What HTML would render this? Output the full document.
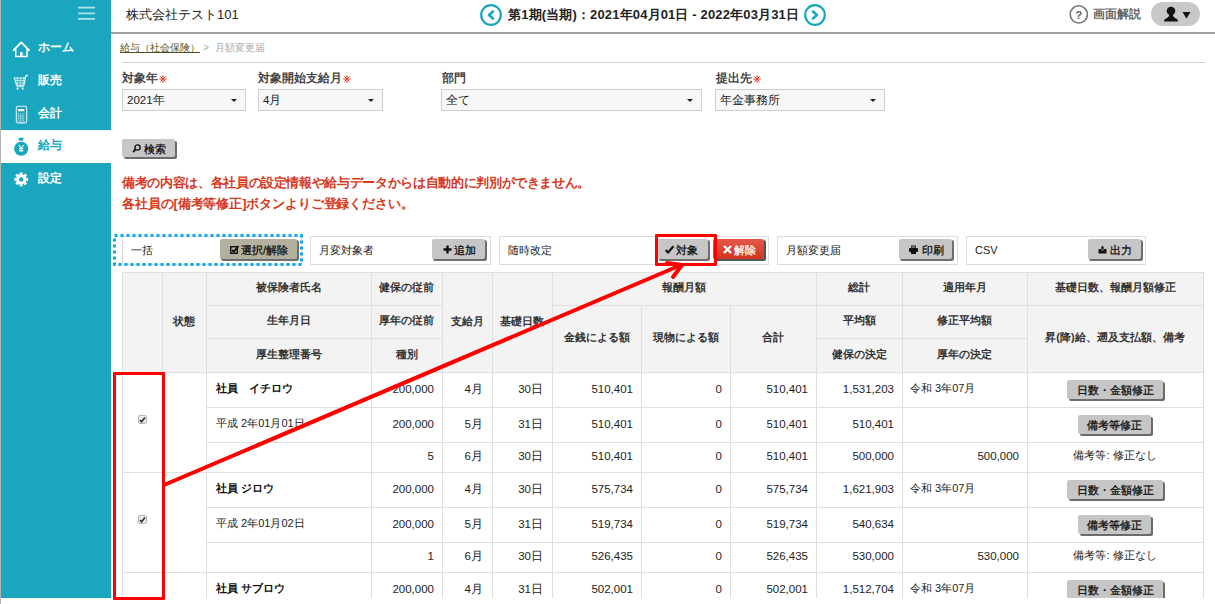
<!DOCTYPE html><html><head><meta charset="utf-8"><style>
*{box-sizing:border-box;margin:0;padding:0}
html,body{width:1215px;height:604px;overflow:hidden;background:#fff}
body{position:relative;font-family:"Liberation Sans",sans-serif;color:#222;font-size:12px}
.ab{position:absolute}
.t{position:absolute;white-space:nowrap;line-height:1}
.btn{position:absolute;background:#c6c6c6;border-radius:2px;box-shadow:2px 2px 0 #6b6b6b;color:#111;white-space:nowrap;text-align:center}
.cell{position:absolute;white-space:nowrap;line-height:1}
</style></head><body>

<div class="ab" style="left:0;top:0;width:1px;height:604px;background:#b4b4b4"></div>
<div class="ab" style="left:1px;top:0;width:110px;height:598px;background:#19a6be"></div>
<svg class="ab" style="left:70px;top:0" width="30" height="26"><g stroke="#b4e2ea" stroke-width="1.8" stroke-linecap="round"><path d="M8.8 7.7 H24.3 M8.8 13.3 H24.3 M8.8 18.8 H24.3"/></g></svg>
<div class="ab" style="left:1px;top:130px;width:110px;height:33px;background:#fff"></div>
<div class="t" style="left:38px;top:41px;font-size:12px;font-weight:bold;color:#fff">ホーム</div>
<div class="t" style="left:38px;top:74px;font-size:12px;font-weight:bold;color:#fff">販売</div>
<div class="t" style="left:38px;top:107px;font-size:12px;font-weight:bold;color:#fff">会計</div>
<div class="t" style="left:38px;top:138.5px;font-size:12px;font-weight:bold;color:#19a6be">給与</div>
<div class="t" style="left:38px;top:171.5px;font-size:12px;font-weight:bold;color:#fff">設定</div>
<svg class="ab" style="left:0;top:0" width="111" height="200" viewBox="0 0 111 200">
<path d="M13.6 50.2 L21.3 42.4 L29 50.2" fill="none" stroke="#fff" stroke-width="1.9" stroke-linecap="round" stroke-linejoin="round"/>
<path d="M15.7 48.5 V56.6 H27 V48.5" fill="none" stroke="#fff" stroke-width="1.5"/>
<rect x="20" y="52.2" width="2.6" height="4.8" fill="#fff"/>
<path d="M14.3 78 H25.2 L24 85.2 H16.6 Z" fill="none" stroke="#fff" stroke-width="1.1" opacity=".9"/>
<path d="M17.3 78 V85 M20.3 78 V85 M23.2 78 V85 M15 80.5 H25 M15.6 83 H24.6" stroke="#fff" stroke-width=".9" opacity=".75"/>
<path d="M25 78.5 L26.2 75.3 H28" fill="none" stroke="#fff" stroke-width="1.2"/>
<path d="M16.5 86.6 H24" stroke="#fff" stroke-width="1" opacity=".8"/>
<circle cx="17.6" cy="88.6" r="1.1" fill="#fff"/><circle cx="22.6" cy="88.6" r="1.1" fill="#fff"/>
<rect x="16.3" y="106.3" width="10.4" height="16.6" rx="1.8" fill="none" stroke="#fff" stroke-width="1.1" opacity=".85"/>
<rect x="18" y="109" width="6.3" height="2.2" fill="#fff"/>
<path d="M18.2 113 V121 M20.6 113 V121 M23 113 V121 M18 116 H24.6 M18 118.3 H24.6 M18 121 H24.6" stroke="#fff" stroke-width=".8" opacity=".55"/>
</svg>
<svg class="ab" style="left:0;top:130" width="111" height="70" viewBox="0 130 111 70">
<path d="M18.2 137.8 H23.8 L22.8 140.8 H19.2 Z" fill="#19a6be"/>
<ellipse cx="21.2" cy="148.8" rx="7.1" ry="7" fill="#19a6be"/>
<path d="M18.8 145 L21.2 148.3 L23.6 145 M21.2 148.3 V152 M19 148.8 H23.4 M19 150.6 H23.4" fill="none" stroke="#fff" stroke-width="1.1"/>
<g fill="#fff" transform="translate(21.2 179.4)"><circle r="5"/><rect x="-1.5" y="-6.9" width="3" height="3.4" transform="rotate(0)"/><rect x="-1.5" y="-6.9" width="3" height="3.4" transform="rotate(45)"/><rect x="-1.5" y="-6.9" width="3" height="3.4" transform="rotate(90)"/><rect x="-1.5" y="-6.9" width="3" height="3.4" transform="rotate(135)"/><rect x="-1.5" y="-6.9" width="3" height="3.4" transform="rotate(180)"/><rect x="-1.5" y="-6.9" width="3" height="3.4" transform="rotate(225)"/><rect x="-1.5" y="-6.9" width="3" height="3.4" transform="rotate(270)"/><rect x="-1.5" y="-6.9" width="3" height="3.4" transform="rotate(315)"/></g>
<circle cx="21.2" cy="179.4" r="2.2" fill="#19a6be"/>
</svg>
<div class="t" style="left:126px;top:8px;font-size:13px;color:#222">株式会社テスト101</div>
<div class="ab" style="left:111px;top:32px;width:1104px;height:2px;background:#a0a0a0"></div>
<svg class="ab" style="left:480px;top:4px" width="22" height="22" viewBox="0 0 22 22"><circle cx="11" cy="11" r="9.8" fill="none" stroke="#19a6be" stroke-width="2.2"/><path d="M13 7.5 L9 11 L13 14.5" fill="none" stroke="#19a6be" stroke-width="2.6" stroke-linecap="round" stroke-linejoin="round"/></svg>
<svg class="ab" style="left:803.5px;top:4px" width="22" height="22" viewBox="0 0 22 22"><circle cx="11" cy="11" r="9.8" fill="none" stroke="#19a6be" stroke-width="2.2"/><path d="M9 7.5 L13 11 L9 14.5" fill="none" stroke="#19a6be" stroke-width="2.6" stroke-linecap="round" stroke-linejoin="round"/></svg>
<div class="t" style="left:508px;top:8px;font-size:13px;letter-spacing:0.15px;font-weight:bold;color:#222">第1期(当期)：2021年04月01日 - 2022年03月31日</div>
<svg class="ab" style="left:1069px;top:5px" width="19" height="19" viewBox="0 0 19 19"><circle cx="9.8" cy="9.4" r="8.6" fill="none" stroke="#777" stroke-width="1.6"/><text x="9.8" y="13.6" font-size="11.5" font-weight="bold" fill="#666" text-anchor="middle" font-family="Liberation Sans">?</text></svg>
<div class="t" style="left:1093px;top:8px;font-size:12px;font-weight:bold;color:#666">画面解説</div>
<div class="ab" style="left:1151px;top:2px;width:49px;height:24px;border-radius:12px;background:#c8c8c8"></div>
<svg class="ab" style="left:1163px;top:6px" width="30" height="17" viewBox="0 0 30 17"><ellipse cx="8" cy="5" rx="4.3" ry="4.2" fill="#111"/><path d="M6.2 8.5 Q6 11.5 2.5 12.8 Q1 13.5 1 15.6 H15 Q15 13.5 13.5 12.8 Q10 11.5 9.8 8.5 Z" fill="#111"/><path d="M19.5 6 H27.5 L23.5 12.5 Z" fill="#111"/></svg>
<div class="t" style="left:120px;top:43px;font-size:10px;color:#50501a;text-decoration:underline">給与（社会保険）</div>
<div class="t" style="left:203px;top:43px;font-size:10px;color:#aaa">&gt;</div>
<div class="t" style="left:215px;top:43px;font-size:10px;color:#aaa">月額変更届</div>
<div class="ab" style="left:122px;top:62px;width:1083px;height:1px;background:#d0d0d0"></div>
<div class="t" style="left:122px;top:73px;font-size:11.5px;font-weight:bold;color:#444">対象年</div>
<svg class="ab" style="left:159.0px;top:75px" width="8" height="8" viewBox="0 0 8 8"><g stroke="#e3402a" stroke-width="1"><path d="M4 0.2 V7.8 M0.2 4 H7.8 M1.3 1.3 L6.7 6.7 M6.7 1.3 L1.3 6.7"/></g><circle cx="4" cy="4" r="1.3" fill="#e3402a"/></svg>
<div class="t" style="left:258px;top:73px;font-size:11.5px;font-weight:bold;color:#444">対象開始支給月</div>
<svg class="ab" style="left:343.0px;top:75px" width="8" height="8" viewBox="0 0 8 8"><g stroke="#e3402a" stroke-width="1"><path d="M4 0.2 V7.8 M0.2 4 H7.8 M1.3 1.3 L6.7 6.7 M6.7 1.3 L1.3 6.7"/></g><circle cx="4" cy="4" r="1.3" fill="#e3402a"/></svg>
<div class="t" style="left:442px;top:73px;font-size:11.5px;font-weight:bold;color:#444">部門</div>
<div class="t" style="left:716px;top:73px;font-size:11.5px;font-weight:bold;color:#444">提出先</div>
<svg class="ab" style="left:752.5px;top:75px" width="8" height="8" viewBox="0 0 8 8"><g stroke="#e3402a" stroke-width="1"><path d="M4 0.2 V7.8 M0.2 4 H7.8 M1.3 1.3 L6.7 6.7 M6.7 1.3 L1.3 6.7"/></g><circle cx="4" cy="4" r="1.3" fill="#e3402a"/></svg>
<div class="ab" style="left:122px;top:89px;width:124px;height:22px;border:1px solid #cfcfcf;background:#f7f7f7"></div>
<div class="t" style="left:127px;top:95px;font-size:11.5px;color:#222">2021年</div>
<div class="ab" style="left:231px;top:99px;width:0;height:0;border-left:3px solid transparent;border-right:3px solid transparent;border-top:3px solid #222"></div>
<div class="ab" style="left:258px;top:89px;width:125px;height:22px;border:1px solid #cfcfcf;background:#f7f7f7"></div>
<div class="t" style="left:263px;top:95px;font-size:11.5px;color:#222">4月</div>
<div class="ab" style="left:368px;top:99px;width:0;height:0;border-left:3px solid transparent;border-right:3px solid transparent;border-top:3px solid #222"></div>
<div class="ab" style="left:441px;top:89px;width:261px;height:22px;border:1px solid #cfcfcf;background:#f7f7f7"></div>
<div class="t" style="left:446px;top:95px;font-size:11.5px;color:#222">全て</div>
<div class="ab" style="left:687px;top:99px;width:0;height:0;border-left:3px solid transparent;border-right:3px solid transparent;border-top:3px solid #222"></div>
<div class="ab" style="left:715px;top:89px;width:170px;height:22px;border:1px solid #cfcfcf;background:#f7f7f7"></div>
<div class="t" style="left:720px;top:95px;font-size:11.5px;color:#222">年金事務所</div>
<div class="ab" style="left:870px;top:99px;width:0;height:0;border-left:3px solid transparent;border-right:3px solid transparent;border-top:3px solid #222"></div>
<div class="btn" style="left:122px;top:139px;width:53px;height:18px"></div>
<svg class="ab" style="left:132px;top:144px" width="9" height="9" viewBox="0 0 9 9"><circle cx="5.5" cy="3.5" r="2.6" fill="none" stroke="#111" stroke-width="1.4"/><path d="M3.6 5.4 L1 8" stroke="#111" stroke-width="1.8"/></svg>
<div class="t" style="left:144px;top:144px;font-size:11px;-webkit-text-stroke:0.3px #111;color:#111">検索</div>
<div class="t" style="left:122px;top:176px;font-size:13px;letter-spacing:-0.35px;font-weight:bold;color:#d8391d">備考の内容は、各社員の設定情報や給与データからは自動的に判別ができません。</div>
<div class="t" style="left:122px;top:197px;font-size:13px;letter-spacing:-0.12px;font-weight:bold;color:#d8391d">各社員の[備考等修正]ボタンよりご登録ください。</div>
<div class="ab" style="left:122px;top:236px;width:180px;height:29px;border:1px solid #dcdcdc;background:#fff"></div>
<div class="t" style="left:131px;top:245px;font-size:11px;color:#222">一括</div>
<div class="ab" style="left:310px;top:236px;width:181px;height:29px;border:1px solid #dcdcdc;background:#fff"></div>
<div class="t" style="left:319px;top:245px;font-size:11px;color:#222">月変対象者</div>
<div class="ab" style="left:499px;top:236px;width:270px;height:29px;border:1px solid #dcdcdc;background:#fff"></div>
<div class="t" style="left:508px;top:245px;font-size:11px;color:#222">随時改定</div>
<div class="ab" style="left:777px;top:236px;width:181px;height:29px;border:1px solid #dcdcdc;background:#fff"></div>
<div class="t" style="left:786px;top:245px;font-size:11px;color:#222">月額変更届</div>
<div class="ab" style="left:966px;top:236px;width:180px;height:29px;border:1px solid #dcdcdc;background:#fff"></div>
<div class="t" style="left:975px;top:245px;font-size:11px;color:#222">CSV</div>
<svg class="ab" style="left:0;top:0" width="320" height="280"><rect x="114.5" y="235.5" width="187" height="29" fill="none" stroke="#0ea8ec" stroke-width="3" stroke-dasharray="3 3"/></svg>
<div class="ab" style="left:220px;top:239px;width:77px;height:20px;background:#b3b09f;border-radius:2px;box-shadow:1.5px 1.5px 0 0.5px #6e6e6e"></div>
<svg class="ab" style="left:230px;top:245px" width="10" height="9" viewBox="0 0 10 9"><rect x="0.7" y="1.7" width="6.6" height="6.6" fill="none" stroke="#111" stroke-width="1.4"/><path d="M2 5 L3.8 6.6 L8.5 1.2" fill="none" stroke="#111" stroke-width="1.8"/></svg>
<div class="t" style="left:241px;top:245px;font-size:11px;-webkit-text-stroke:0.3px #111;color:#111">選択/解除</div>
<div class="ab" style="left:432px;top:239px;width:53px;height:20px;background:#c6c6c6;border-radius:2px;box-shadow:1.5px 1.5px 0 0.5px #6e6e6e"></div>
<svg class="ab" style="left:443px;top:245px" width="10" height="9" viewBox="0 0 10 9"><path d="M4.5 0.5 V8.5 M0.5 4.5 H8.5" stroke="#111" stroke-width="2.4"/></svg>
<div class="t" style="left:454px;top:245px;font-size:11px;-webkit-text-stroke:0.3px #111;color:#111">追加</div>
<div class="ab" style="left:658px;top:239px;width:50px;height:20px;background:#c6c6c6;border-radius:2px;box-shadow:1.5px 1.5px 0 0.5px #6e6e6e"></div>
<svg class="ab" style="left:665px;top:245px" width="10" height="9" viewBox="0 0 10 9"><path d="M0.8 5 L3 7.6 L8.4 1.2" fill="none" stroke="#111" stroke-width="2.2" stroke-linejoin="round"/></svg>
<div class="t" style="left:676px;top:245px;font-size:11px;-webkit-text-stroke:0.3px #111;color:#111">対象</div>
<div class="ab" style="left:713px;top:239px;width:51px;height:20px;background:linear-gradient(#e5574a,#d5331f);border-radius:2px;box-shadow:1.5px 1.5px 0 0.5px #4d5757"></div>
<svg class="ab" style="left:723px;top:245px" width="10" height="9" viewBox="0 0 10 9"><path d="M1 1 L8 8 M8 1 L1 8" stroke="#fff" stroke-width="2.4"/></svg>
<div class="t" style="left:734px;top:245px;font-size:11px;-webkit-text-stroke:0.3px #fff;color:#fff">解除</div>
<div class="ab" style="left:899px;top:239px;width:53px;height:20px;background:#c6c6c6;border-radius:2px;box-shadow:1.5px 1.5px 0 0.5px #6e6e6e"></div>
<svg class="ab" style="left:909px;top:245px" width="10" height="9" viewBox="0 0 10 9"><rect x="2" y="0.5" width="5" height="3" fill="#111"/><rect x="0" y="3" width="9" height="4" rx="1" fill="#111"/><rect x="2" y="6" width="5" height="3" fill="#111"/><rect x="2.5" y="1.5" width="4" height="1" fill="#ccc"/></svg>
<div class="t" style="left:922px;top:245px;font-size:11px;-webkit-text-stroke:0.3px #111;color:#111">印刷</div>
<div class="ab" style="left:1088px;top:239px;width:53px;height:20px;background:#c6c6c6;border-radius:2px;box-shadow:1.5px 1.5px 0 0.5px #6e6e6e"></div>
<svg class="ab" style="left:1098px;top:245px" width="10" height="9" viewBox="0 0 10 9"><path d="M0.5 4 H3 L4.5 6 L6 4 H8.5 V8.5 H0.5 Z" fill="#111"/><path d="M4.5 0.5 L6 3 L4.5 5 L3 3 Z" fill="#111"/></svg>
<div class="t" style="left:1110px;top:245px;font-size:11px;-webkit-text-stroke:0.3px #111;color:#111">出力</div>
<div class="ab" style="left:122px;top:272px;width:41px;height:101px;border:1px solid #dfdfdf;background:#f3f3f3;"></div>
<div class="ab" style="left:162px;top:272px;width:45px;height:101px;border:1px solid #dfdfdf;background:#f3f3f3;"></div>
<div class="cell" style="left:162px;width:44px;top:316px;text-align:center;font-size:11px;font-weight:bold;color:#333">状態</div>
<div class="ab" style="left:206px;top:272px;width:166px;height:34px;border:1px solid #dfdfdf;background:#f3f3f3;"></div>
<div class="cell" style="left:206px;width:165px;top:282px;text-align:center;font-size:11px;font-weight:bold;color:#333">被保険者氏名</div>
<div class="ab" style="left:206px;top:305px;width:166px;height:34px;border:1px solid #dfdfdf;background:#f3f3f3;"></div>
<div class="cell" style="left:206px;width:165px;top:315px;text-align:center;font-size:11px;font-weight:bold;color:#333">生年月日</div>
<div class="ab" style="left:206px;top:338px;width:166px;height:35px;border:1px solid #dfdfdf;background:#f3f3f3;"></div>
<div class="cell" style="left:206px;width:165px;top:349px;text-align:center;font-size:11px;font-weight:bold;color:#333">厚生整理番号</div>
<div class="ab" style="left:371px;top:272px;width:72px;height:34px;border:1px solid #dfdfdf;background:#f3f3f3;"></div>
<div class="cell" style="left:371px;width:71px;top:282px;text-align:center;font-size:11px;font-weight:bold;color:#333">健保の従前</div>
<div class="ab" style="left:371px;top:305px;width:72px;height:34px;border:1px solid #dfdfdf;background:#f3f3f3;"></div>
<div class="cell" style="left:371px;width:71px;top:315px;text-align:center;font-size:11px;font-weight:bold;color:#333">厚年の従前</div>
<div class="ab" style="left:371px;top:338px;width:72px;height:35px;border:1px solid #dfdfdf;background:#f3f3f3;"></div>
<div class="cell" style="left:371px;width:71px;top:349px;text-align:center;font-size:11px;font-weight:bold;color:#333">種別</div>
<div class="ab" style="left:442px;top:272px;width:51px;height:101px;border:1px solid #dfdfdf;background:#f3f3f3;"></div>
<div class="cell" style="left:442px;width:50px;top:316px;text-align:center;font-size:11px;font-weight:bold;color:#333">支給月</div>
<div class="ab" style="left:492px;top:272px;width:61px;height:101px;border:1px solid #dfdfdf;background:#f3f3f3;"></div>
<div class="cell" style="left:492px;width:60px;top:316px;text-align:center;font-size:11px;font-weight:bold;color:#333">基礎日数</div>
<div class="ab" style="left:552px;top:272px;width:265px;height:34px;border:1px solid #dfdfdf;background:#f3f3f3;"></div>
<div class="cell" style="left:552px;width:264px;top:282px;text-align:center;font-size:11px;font-weight:bold;color:#333">報酬月額</div>
<div class="ab" style="left:552px;top:305px;width:90px;height:68px;border:1px solid #dfdfdf;background:#f3f3f3;"></div>
<div class="cell" style="left:552px;width:89px;top:332px;text-align:center;font-size:11px;font-weight:bold;color:#333">金銭による額</div>
<div class="ab" style="left:641px;top:305px;width:90px;height:68px;border:1px solid #dfdfdf;background:#f3f3f3;"></div>
<div class="cell" style="left:641px;width:89px;top:332px;text-align:center;font-size:11px;font-weight:bold;color:#333">現物による額</div>
<div class="ab" style="left:730px;top:305px;width:87px;height:68px;border:1px solid #dfdfdf;background:#f3f3f3;"></div>
<div class="cell" style="left:730px;width:86px;top:332px;text-align:center;font-size:11px;font-weight:bold;color:#333">合計</div>
<div class="ab" style="left:816px;top:272px;width:87px;height:34px;border:1px solid #dfdfdf;background:#f3f3f3;"></div>
<div class="cell" style="left:816px;width:86px;top:282px;text-align:center;font-size:11px;font-weight:bold;color:#333">総計</div>
<div class="ab" style="left:816px;top:305px;width:87px;height:34px;border:1px solid #dfdfdf;background:#f3f3f3;"></div>
<div class="cell" style="left:816px;width:86px;top:315px;text-align:center;font-size:11px;font-weight:bold;color:#333">平均額</div>
<div class="ab" style="left:816px;top:338px;width:87px;height:35px;border:1px solid #dfdfdf;background:#f3f3f3;"></div>
<div class="cell" style="left:816px;width:86px;top:349px;text-align:center;font-size:11px;font-weight:bold;color:#333">健保の決定</div>
<div class="ab" style="left:902px;top:272px;width:126px;height:34px;border:1px solid #dfdfdf;background:#f3f3f3;"></div>
<div class="cell" style="left:902px;width:125px;top:282px;text-align:center;font-size:11px;font-weight:bold;color:#333">適用年月</div>
<div class="ab" style="left:902px;top:305px;width:126px;height:34px;border:1px solid #dfdfdf;background:#f3f3f3;"></div>
<div class="cell" style="left:902px;width:125px;top:315px;text-align:center;font-size:11px;font-weight:bold;color:#333">修正平均額</div>
<div class="ab" style="left:902px;top:338px;width:126px;height:35px;border:1px solid #dfdfdf;background:#f3f3f3;"></div>
<div class="cell" style="left:902px;width:125px;top:349px;text-align:center;font-size:11px;font-weight:bold;color:#333">厚年の決定</div>
<div class="ab" style="left:1027px;top:272px;width:177px;height:34px;border:1px solid #dfdfdf;background:#f3f3f3;"></div>
<div class="cell" style="left:1027px;width:176px;top:282px;text-align:center;font-size:11px;font-weight:bold;color:#333">基礎日数、報酬月額修正</div>
<div class="ab" style="left:1027px;top:305px;width:177px;height:68px;border:1px solid #dfdfdf;background:#f3f3f3;"></div>
<div class="cell" style="left:1027px;width:176px;top:332px;text-align:center;font-size:11px;font-weight:bold;color:#333">昇(降)給、遡及支払額、備考</div>
<div class="ab" style="left:122px;top:372px;width:41px;height:101px;border:1px solid #dfdfdf;"></div>
<div class="ab" style="left:162px;top:372px;width:45px;height:101px;border:1px solid #dfdfdf;"></div>
<div class="ab" style="left:206px;top:372px;width:166px;height:36px;border:1px solid #dfdfdf;"></div>
<div class="ab" style="left:371px;top:372px;width:72px;height:36px;border:1px solid #dfdfdf;"></div>
<div class="ab" style="left:442px;top:372px;width:51px;height:36px;border:1px solid #dfdfdf;"></div>
<div class="ab" style="left:492px;top:372px;width:61px;height:36px;border:1px solid #dfdfdf;"></div>
<div class="ab" style="left:552px;top:372px;width:90px;height:36px;border:1px solid #dfdfdf;"></div>
<div class="ab" style="left:641px;top:372px;width:90px;height:36px;border:1px solid #dfdfdf;"></div>
<div class="ab" style="left:730px;top:372px;width:87px;height:36px;border:1px solid #dfdfdf;"></div>
<div class="ab" style="left:816px;top:372px;width:87px;height:36px;border:1px solid #dfdfdf;"></div>
<div class="ab" style="left:902px;top:372px;width:126px;height:36px;border:1px solid #dfdfdf;"></div>
<div class="ab" style="left:1027px;top:372px;width:177px;height:36px;border:1px solid #dfdfdf;"></div>
<div class="ab" style="left:206px;top:407px;width:166px;height:36px;border:1px solid #dfdfdf;"></div>
<div class="ab" style="left:371px;top:407px;width:72px;height:36px;border:1px solid #dfdfdf;"></div>
<div class="ab" style="left:442px;top:407px;width:51px;height:36px;border:1px solid #dfdfdf;"></div>
<div class="ab" style="left:492px;top:407px;width:61px;height:36px;border:1px solid #dfdfdf;"></div>
<div class="ab" style="left:552px;top:407px;width:90px;height:36px;border:1px solid #dfdfdf;"></div>
<div class="ab" style="left:641px;top:407px;width:90px;height:36px;border:1px solid #dfdfdf;"></div>
<div class="ab" style="left:730px;top:407px;width:87px;height:36px;border:1px solid #dfdfdf;"></div>
<div class="ab" style="left:816px;top:407px;width:87px;height:36px;border:1px solid #dfdfdf;"></div>
<div class="ab" style="left:902px;top:407px;width:126px;height:36px;border:1px solid #dfdfdf;"></div>
<div class="ab" style="left:1027px;top:407px;width:177px;height:36px;border:1px solid #dfdfdf;"></div>
<div class="ab" style="left:206px;top:442px;width:166px;height:31px;border:1px solid #dfdfdf;"></div>
<div class="ab" style="left:371px;top:442px;width:72px;height:31px;border:1px solid #dfdfdf;"></div>
<div class="ab" style="left:442px;top:442px;width:51px;height:31px;border:1px solid #dfdfdf;"></div>
<div class="ab" style="left:492px;top:442px;width:61px;height:31px;border:1px solid #dfdfdf;"></div>
<div class="ab" style="left:552px;top:442px;width:90px;height:31px;border:1px solid #dfdfdf;"></div>
<div class="ab" style="left:641px;top:442px;width:90px;height:31px;border:1px solid #dfdfdf;"></div>
<div class="ab" style="left:730px;top:442px;width:87px;height:31px;border:1px solid #dfdfdf;"></div>
<div class="ab" style="left:816px;top:442px;width:87px;height:31px;border:1px solid #dfdfdf;"></div>
<div class="ab" style="left:902px;top:442px;width:126px;height:31px;border:1px solid #dfdfdf;"></div>
<div class="ab" style="left:1027px;top:442px;width:177px;height:31px;border:1px solid #dfdfdf;"></div>
<div class="ab" style="left:138px;top:415px;width:9px;height:9px;border:1px solid #b5b5b5;border-radius:2px;background:#ececec"></div>
<svg class="ab" style="left:138px;top:415px" width="9" height="9" viewBox="0 0 9 9"><path d="M2 5.2 L3.6 6.8 L7 2.5" fill="none" stroke="#333" stroke-width="1.7"/></svg>
<div class="cell" style="left:216px;top:383px;font-size:11px;font-weight:bold;color:#111">社員　イチロウ</div>
<div class="cell" style="left:371px;width:63px;top:384px;text-align:right;font-size:11.5px;color:#222">200,000</div>
<div class="cell" style="left:442px;width:41px;top:384px;text-align:right;font-size:11.5px;color:#222">4月</div>
<div class="cell" style="left:492px;width:51px;top:384px;text-align:right;font-size:11.5px;color:#222">30日</div>
<div class="cell" style="left:552px;width:81px;top:384px;text-align:right;font-size:11.5px;color:#222">510,401</div>
<div class="cell" style="left:641px;width:81px;top:384px;text-align:right;font-size:11.5px;color:#222">0</div>
<div class="cell" style="left:730px;width:78px;top:384px;text-align:right;font-size:11.5px;color:#222">510,401</div>
<div class="cell" style="left:816px;width:78px;top:384px;text-align:right;font-size:11.5px;color:#222">1,531,203</div>
<div class="cell" style="left:910px;top:383px;font-size:11px;color:#222">令和 3年07月</div>
<div class="btn" style="left:1067px;top:380px;width:96px;height:19px;background:#c6c6c6;color:#111;font-size:11px;font-weight:bold;line-height:19px"><span style="position:relative;top:1px;font-weight:normal;-webkit-text-stroke:0.3px #111">日数・金額修正</span></div>
<div class="cell" style="left:216px;top:418px;font-size:11px;color:#222">平成 2年01月01日</div>
<div class="cell" style="left:371px;width:63px;top:419px;text-align:right;font-size:11.5px;color:#222">200,000</div>
<div class="cell" style="left:442px;width:41px;top:419px;text-align:right;font-size:11.5px;color:#222">5月</div>
<div class="cell" style="left:492px;width:51px;top:419px;text-align:right;font-size:11.5px;color:#222">31日</div>
<div class="cell" style="left:552px;width:81px;top:419px;text-align:right;font-size:11.5px;color:#222">510,401</div>
<div class="cell" style="left:641px;width:81px;top:419px;text-align:right;font-size:11.5px;color:#222">0</div>
<div class="cell" style="left:730px;width:78px;top:419px;text-align:right;font-size:11.5px;color:#222">510,401</div>
<div class="cell" style="left:816px;width:78px;top:419px;text-align:right;font-size:11.5px;color:#222">510,401</div>
<div class="btn" style="left:1078px;top:415px;width:73px;height:19px;background:#c6c6c6;color:#111;font-size:11px;font-weight:bold;line-height:19px"><span style="position:relative;top:1px;font-weight:normal;-webkit-text-stroke:0.3px #111">備考等修正</span></div>
<div class="cell" style="left:371px;width:63px;top:451px;text-align:right;font-size:11.5px;color:#222">5</div>
<div class="cell" style="left:442px;width:41px;top:451px;text-align:right;font-size:11.5px;color:#222">6月</div>
<div class="cell" style="left:492px;width:51px;top:451px;text-align:right;font-size:11.5px;color:#222">30日</div>
<div class="cell" style="left:552px;width:81px;top:451px;text-align:right;font-size:11.5px;color:#222">510,401</div>
<div class="cell" style="left:641px;width:81px;top:451px;text-align:right;font-size:11.5px;color:#222">0</div>
<div class="cell" style="left:730px;width:78px;top:451px;text-align:right;font-size:11.5px;color:#222">510,401</div>
<div class="cell" style="left:816px;width:78px;top:451px;text-align:right;font-size:11.5px;color:#222">500,000</div>
<div class="cell" style="left:902px;width:117px;top:451px;text-align:right;font-size:11.5px;color:#222">500,000</div>
<div class="cell" style="left:1027px;width:176px;top:450px;text-align:center;font-size:11px;color:#222">備考等: 修正なし</div>
<div class="ab" style="left:122px;top:472px;width:41px;height:101px;border:1px solid #dfdfdf;"></div>
<div class="ab" style="left:162px;top:472px;width:45px;height:101px;border:1px solid #dfdfdf;"></div>
<div class="ab" style="left:206px;top:472px;width:166px;height:36px;border:1px solid #dfdfdf;"></div>
<div class="ab" style="left:371px;top:472px;width:72px;height:36px;border:1px solid #dfdfdf;"></div>
<div class="ab" style="left:442px;top:472px;width:51px;height:36px;border:1px solid #dfdfdf;"></div>
<div class="ab" style="left:492px;top:472px;width:61px;height:36px;border:1px solid #dfdfdf;"></div>
<div class="ab" style="left:552px;top:472px;width:90px;height:36px;border:1px solid #dfdfdf;"></div>
<div class="ab" style="left:641px;top:472px;width:90px;height:36px;border:1px solid #dfdfdf;"></div>
<div class="ab" style="left:730px;top:472px;width:87px;height:36px;border:1px solid #dfdfdf;"></div>
<div class="ab" style="left:816px;top:472px;width:87px;height:36px;border:1px solid #dfdfdf;"></div>
<div class="ab" style="left:902px;top:472px;width:126px;height:36px;border:1px solid #dfdfdf;"></div>
<div class="ab" style="left:1027px;top:472px;width:177px;height:36px;border:1px solid #dfdfdf;"></div>
<div class="ab" style="left:206px;top:507px;width:166px;height:36px;border:1px solid #dfdfdf;"></div>
<div class="ab" style="left:371px;top:507px;width:72px;height:36px;border:1px solid #dfdfdf;"></div>
<div class="ab" style="left:442px;top:507px;width:51px;height:36px;border:1px solid #dfdfdf;"></div>
<div class="ab" style="left:492px;top:507px;width:61px;height:36px;border:1px solid #dfdfdf;"></div>
<div class="ab" style="left:552px;top:507px;width:90px;height:36px;border:1px solid #dfdfdf;"></div>
<div class="ab" style="left:641px;top:507px;width:90px;height:36px;border:1px solid #dfdfdf;"></div>
<div class="ab" style="left:730px;top:507px;width:87px;height:36px;border:1px solid #dfdfdf;"></div>
<div class="ab" style="left:816px;top:507px;width:87px;height:36px;border:1px solid #dfdfdf;"></div>
<div class="ab" style="left:902px;top:507px;width:126px;height:36px;border:1px solid #dfdfdf;"></div>
<div class="ab" style="left:1027px;top:507px;width:177px;height:36px;border:1px solid #dfdfdf;"></div>
<div class="ab" style="left:206px;top:542px;width:166px;height:31px;border:1px solid #dfdfdf;"></div>
<div class="ab" style="left:371px;top:542px;width:72px;height:31px;border:1px solid #dfdfdf;"></div>
<div class="ab" style="left:442px;top:542px;width:51px;height:31px;border:1px solid #dfdfdf;"></div>
<div class="ab" style="left:492px;top:542px;width:61px;height:31px;border:1px solid #dfdfdf;"></div>
<div class="ab" style="left:552px;top:542px;width:90px;height:31px;border:1px solid #dfdfdf;"></div>
<div class="ab" style="left:641px;top:542px;width:90px;height:31px;border:1px solid #dfdfdf;"></div>
<div class="ab" style="left:730px;top:542px;width:87px;height:31px;border:1px solid #dfdfdf;"></div>
<div class="ab" style="left:816px;top:542px;width:87px;height:31px;border:1px solid #dfdfdf;"></div>
<div class="ab" style="left:902px;top:542px;width:126px;height:31px;border:1px solid #dfdfdf;"></div>
<div class="ab" style="left:1027px;top:542px;width:177px;height:31px;border:1px solid #dfdfdf;"></div>
<div class="ab" style="left:138px;top:515px;width:9px;height:9px;border:1px solid #b5b5b5;border-radius:2px;background:#ececec"></div>
<svg class="ab" style="left:138px;top:515px" width="9" height="9" viewBox="0 0 9 9"><path d="M2 5.2 L3.6 6.8 L7 2.5" fill="none" stroke="#333" stroke-width="1.7"/></svg>
<div class="cell" style="left:216px;top:483px;font-size:11px;font-weight:bold;color:#111">社員 ジロウ</div>
<div class="cell" style="left:371px;width:63px;top:484px;text-align:right;font-size:11.5px;color:#222">200,000</div>
<div class="cell" style="left:442px;width:41px;top:484px;text-align:right;font-size:11.5px;color:#222">4月</div>
<div class="cell" style="left:492px;width:51px;top:484px;text-align:right;font-size:11.5px;color:#222">30日</div>
<div class="cell" style="left:552px;width:81px;top:484px;text-align:right;font-size:11.5px;color:#222">575,734</div>
<div class="cell" style="left:641px;width:81px;top:484px;text-align:right;font-size:11.5px;color:#222">0</div>
<div class="cell" style="left:730px;width:78px;top:484px;text-align:right;font-size:11.5px;color:#222">575,734</div>
<div class="cell" style="left:816px;width:78px;top:484px;text-align:right;font-size:11.5px;color:#222">1,621,903</div>
<div class="cell" style="left:910px;top:483px;font-size:11px;color:#222">令和 3年07月</div>
<div class="btn" style="left:1067px;top:480px;width:96px;height:19px;background:#c6c6c6;color:#111;font-size:11px;font-weight:bold;line-height:19px"><span style="position:relative;top:1px;font-weight:normal;-webkit-text-stroke:0.3px #111">日数・金額修正</span></div>
<div class="cell" style="left:216px;top:518px;font-size:11px;color:#222">平成 2年01月02日</div>
<div class="cell" style="left:371px;width:63px;top:519px;text-align:right;font-size:11.5px;color:#222">200,000</div>
<div class="cell" style="left:442px;width:41px;top:519px;text-align:right;font-size:11.5px;color:#222">5月</div>
<div class="cell" style="left:492px;width:51px;top:519px;text-align:right;font-size:11.5px;color:#222">31日</div>
<div class="cell" style="left:552px;width:81px;top:519px;text-align:right;font-size:11.5px;color:#222">519,734</div>
<div class="cell" style="left:641px;width:81px;top:519px;text-align:right;font-size:11.5px;color:#222">0</div>
<div class="cell" style="left:730px;width:78px;top:519px;text-align:right;font-size:11.5px;color:#222">519,734</div>
<div class="cell" style="left:816px;width:78px;top:519px;text-align:right;font-size:11.5px;color:#222">540,634</div>
<div class="btn" style="left:1078px;top:515px;width:73px;height:19px;background:#c6c6c6;color:#111;font-size:11px;font-weight:bold;line-height:19px"><span style="position:relative;top:1px;font-weight:normal;-webkit-text-stroke:0.3px #111">備考等修正</span></div>
<div class="cell" style="left:371px;width:63px;top:551px;text-align:right;font-size:11.5px;color:#222">1</div>
<div class="cell" style="left:442px;width:41px;top:551px;text-align:right;font-size:11.5px;color:#222">6月</div>
<div class="cell" style="left:492px;width:51px;top:551px;text-align:right;font-size:11.5px;color:#222">30日</div>
<div class="cell" style="left:552px;width:81px;top:551px;text-align:right;font-size:11.5px;color:#222">526,435</div>
<div class="cell" style="left:641px;width:81px;top:551px;text-align:right;font-size:11.5px;color:#222">0</div>
<div class="cell" style="left:730px;width:78px;top:551px;text-align:right;font-size:11.5px;color:#222">526,435</div>
<div class="cell" style="left:816px;width:78px;top:551px;text-align:right;font-size:11.5px;color:#222">530,000</div>
<div class="cell" style="left:902px;width:117px;top:551px;text-align:right;font-size:11.5px;color:#222">530,000</div>
<div class="cell" style="left:1027px;width:176px;top:550px;text-align:center;font-size:11px;color:#222">備考等: 修正なし</div>
<div class="ab" style="left:122px;top:572px;width:41px;height:101px;border:1px solid #dfdfdf;"></div>
<div class="ab" style="left:162px;top:572px;width:45px;height:101px;border:1px solid #dfdfdf;"></div>
<div class="ab" style="left:206px;top:572px;width:166px;height:36px;border:1px solid #dfdfdf;"></div>
<div class="ab" style="left:371px;top:572px;width:72px;height:36px;border:1px solid #dfdfdf;"></div>
<div class="ab" style="left:442px;top:572px;width:51px;height:36px;border:1px solid #dfdfdf;"></div>
<div class="ab" style="left:492px;top:572px;width:61px;height:36px;border:1px solid #dfdfdf;"></div>
<div class="ab" style="left:552px;top:572px;width:90px;height:36px;border:1px solid #dfdfdf;"></div>
<div class="ab" style="left:641px;top:572px;width:90px;height:36px;border:1px solid #dfdfdf;"></div>
<div class="ab" style="left:730px;top:572px;width:87px;height:36px;border:1px solid #dfdfdf;"></div>
<div class="ab" style="left:816px;top:572px;width:87px;height:36px;border:1px solid #dfdfdf;"></div>
<div class="ab" style="left:902px;top:572px;width:126px;height:36px;border:1px solid #dfdfdf;"></div>
<div class="ab" style="left:1027px;top:572px;width:177px;height:36px;border:1px solid #dfdfdf;"></div>
<div class="ab" style="left:206px;top:607px;width:166px;height:36px;border:1px solid #dfdfdf;"></div>
<div class="ab" style="left:371px;top:607px;width:72px;height:36px;border:1px solid #dfdfdf;"></div>
<div class="ab" style="left:442px;top:607px;width:51px;height:36px;border:1px solid #dfdfdf;"></div>
<div class="ab" style="left:492px;top:607px;width:61px;height:36px;border:1px solid #dfdfdf;"></div>
<div class="ab" style="left:552px;top:607px;width:90px;height:36px;border:1px solid #dfdfdf;"></div>
<div class="ab" style="left:641px;top:607px;width:90px;height:36px;border:1px solid #dfdfdf;"></div>
<div class="ab" style="left:730px;top:607px;width:87px;height:36px;border:1px solid #dfdfdf;"></div>
<div class="ab" style="left:816px;top:607px;width:87px;height:36px;border:1px solid #dfdfdf;"></div>
<div class="ab" style="left:902px;top:607px;width:126px;height:36px;border:1px solid #dfdfdf;"></div>
<div class="ab" style="left:1027px;top:607px;width:177px;height:36px;border:1px solid #dfdfdf;"></div>
<div class="ab" style="left:206px;top:642px;width:166px;height:31px;border:1px solid #dfdfdf;"></div>
<div class="ab" style="left:371px;top:642px;width:72px;height:31px;border:1px solid #dfdfdf;"></div>
<div class="ab" style="left:442px;top:642px;width:51px;height:31px;border:1px solid #dfdfdf;"></div>
<div class="ab" style="left:492px;top:642px;width:61px;height:31px;border:1px solid #dfdfdf;"></div>
<div class="ab" style="left:552px;top:642px;width:90px;height:31px;border:1px solid #dfdfdf;"></div>
<div class="ab" style="left:641px;top:642px;width:90px;height:31px;border:1px solid #dfdfdf;"></div>
<div class="ab" style="left:730px;top:642px;width:87px;height:31px;border:1px solid #dfdfdf;"></div>
<div class="ab" style="left:816px;top:642px;width:87px;height:31px;border:1px solid #dfdfdf;"></div>
<div class="ab" style="left:902px;top:642px;width:126px;height:31px;border:1px solid #dfdfdf;"></div>
<div class="ab" style="left:1027px;top:642px;width:177px;height:31px;border:1px solid #dfdfdf;"></div>
<div class="cell" style="left:216px;top:583px;font-size:11px;font-weight:bold;color:#111">社員 サブロウ</div>
<div class="cell" style="left:371px;width:63px;top:584px;text-align:right;font-size:11.5px;color:#222">200,000</div>
<div class="cell" style="left:442px;width:41px;top:584px;text-align:right;font-size:11.5px;color:#222">4月</div>
<div class="cell" style="left:492px;width:51px;top:584px;text-align:right;font-size:11.5px;color:#222">31日</div>
<div class="cell" style="left:552px;width:81px;top:584px;text-align:right;font-size:11.5px;color:#222">502,001</div>
<div class="cell" style="left:641px;width:81px;top:584px;text-align:right;font-size:11.5px;color:#222">0</div>
<div class="cell" style="left:730px;width:78px;top:584px;text-align:right;font-size:11.5px;color:#222">502,001</div>
<div class="cell" style="left:816px;width:78px;top:584px;text-align:right;font-size:11.5px;color:#222">1,512,704</div>
<div class="cell" style="left:910px;top:583px;font-size:11px;color:#222">令和 3年07月</div>
<div class="btn" style="left:1067px;top:580px;width:96px;height:19px;background:#c6c6c6;color:#111;font-size:11px;font-weight:bold;line-height:19px"><span style="position:relative;top:1px;font-weight:normal;-webkit-text-stroke:0.3px #111">日数・金額修正</span></div>
<div class="ab" style="left:1px;top:598px;width:1214px;height:6px;background:#fff"></div>
<div class="ab" style="left:113px;top:372px;width:52px;height:228px;border:3px solid #f00;border-radius:1px"></div>
<div class="ab" style="left:655px;top:234px;width:62px;height:32px;border:3px solid #f00;border-radius:1px"></div>
<svg class="ab" style="left:0;top:0" width="1215" height="604"><path d="M164 485 L681 265" stroke="#f00" stroke-width="4" fill="none"/><path d="M667 263 L682 265 L673 277" stroke="#f00" stroke-width="4" fill="none" stroke-linecap="round" stroke-linejoin="round"/></svg>
</body></html>
